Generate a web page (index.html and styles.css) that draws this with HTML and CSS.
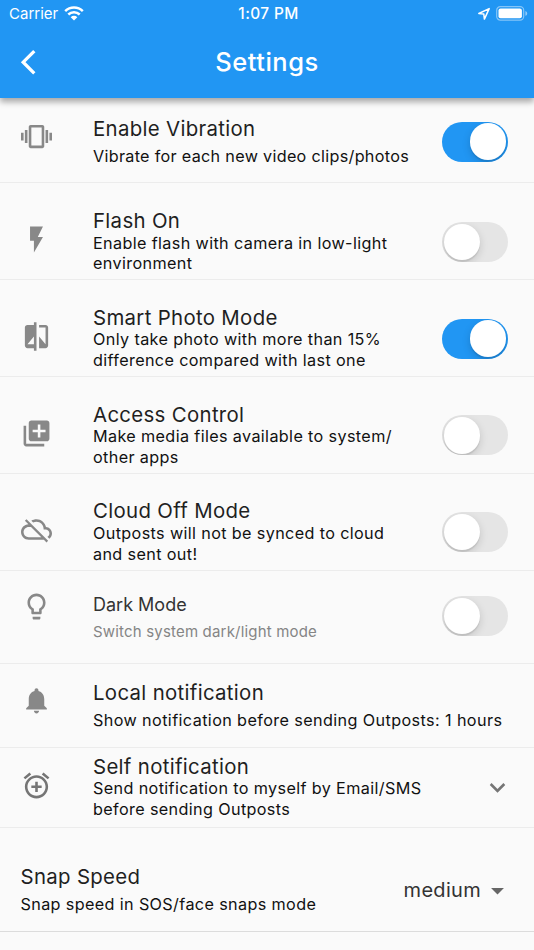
FILE: index.html
```html
<!DOCTYPE html>
<html lang="en">
<head>
  <meta charset="UTF-8">
  <meta name="viewport" content="width=device-width, initial-scale=1">
  <title>Settings</title>
  <link rel="stylesheet" href="styles.css">
</head>
<body>
  <header class="app-header">
    <div class="status-bar">
      <div class="status-left">
        <span class="carrier">Carrier</span>
        <svg class="wifi" viewBox="0 0 20 15" width="20" height="15">
          <path d="M1.2 5.2a12.6 12.6 0 0 1 17.6 0M4.3 8.5a8.2 8.2 0 0 1 11.4 0" fill="none" stroke="#fff" stroke-width="2.5"/>
          <path d="M10 14.5L6.7 11.2a4.7 4.7 0 0 1 6.6 0z" fill="#fff"/>
        </svg>
      </div>
      <span class="time">1:07 PM</span>
      <div class="status-right">
        <svg class="location" viewBox="0 0 14 14" width="14" height="14">
          <path d="M12.2 1.6L1.8 6.5l5 .6.6 5z" fill="none" stroke="#fff" stroke-width="1.5" stroke-linejoin="round"/>
        </svg>
        <svg class="battery" viewBox="0 0 32 15" width="32" height="15">
          <rect x=".7" y=".7" width="27" height="13.4" rx="3.6" fill="none" stroke="#fff" stroke-opacity=".45" stroke-width="1.2"/>
          <rect x="2.5" y="2.5" width="23.4" height="9.8" rx="2" fill="#fff"/>
          <path d="M29.4 5c1.2.5 1.8 1.4 1.8 2.4s-.6 1.9-1.8 2.4z" fill="#fff" fill-opacity=".5"/>
        </svg>
      </div>
    </div>
    <div class="nav-bar">
      <svg class="back" viewBox="0 0 18 28" width="18" height="28">
        <path d="M15.3 3.1L4.2 14.2l11.1 11.1" fill="none" stroke="#fff" stroke-width="3.3"/>
      </svg>
      <h1>Settings</h1>
    </div>
  </header>

  <main class="settings">
    <div class="row row-first">
      <svg class="icon" viewBox="0 0 24 24"><path d="M0 15h2V9H0v6zm3 2h2V7H3v10zm19-8v6h2V9h-2zm-3 8h2V7h-2v10zM16.5 3h-9C6.67 3 6 3.67 6 4.5v15c0 .83.67 1.5 1.5 1.5h9c.83 0 1.5-.67 1.5-1.5v-15c0-.83-.67-1.5-1.5-1.5zM16 19H8V5h8v14z"/></svg>
      <div class="text">
        <h2>Enable Vibration</h2>
        <p>Vibrate for each new video clips/photos</p>
      </div>
      <span class="switch on"></span>
    </div>

    <div class="row row-double">
      <svg class="icon" viewBox="0 0 24 24"><path d="M7 2v11h3v9l7-12h-4l4-8z"/></svg>
      <div class="text">
        <h2>Flash On</h2>
        <p>Enable flash with camera in low-light<br>environment</p>
      </div>
      <span class="switch"></span>
    </div>

    <div class="row row-double">
      <svg class="icon" viewBox="0 0 24 24"><path d="M10 3H5c-1.1 0-2 .9-2 2v14c0 1.1.9 2 2 2h5v2h2V1h-2v2zm0 15H5l5-6v6zm9-15h-5v2h5v13l-5-6v9h5c1.1 0 2-.9 2-2V5c0-1.1-.9-2-2-2z"/></svg>
      <div class="text">
        <h2>Smart Photo Mode</h2>
        <p>Only take photo with more than 15%<br>difference compared with last one</p>
      </div>
      <span class="switch on"></span>
    </div>

    <div class="row row-double">
      <svg class="icon" viewBox="0 0 24 24"><path d="M4 6H2v14c0 1.1.9 2 2 2h14v-2H4V6zm16-4H8c-1.1 0-2 .9-2 2v12c0 1.1.9 2 2 2h12c1.1 0 2-.9 2-2V4c0-1.1-.9-2-2-2zm-1 9h-4v4h-2v-4H9V9h4V5h2v4h4v2z"/></svg>
      <div class="text">
        <h2>Access Control</h2>
        <p>Make media files available to system/<br>other apps</p>
      </div>
      <span class="switch"></span>
    </div>

    <div class="row row-double">
      <svg class="icon" viewBox="0 0 24 24"><path d="M19.35 10.04C18.67 6.59 15.64 4 12 4c-1.48 0-2.85.43-4.01 1.17l1.46 1.46C10.21 6.23 11.08 6 12 6c3.04 0 5.5 2.46 5.5 5.5v.5H19c1.66 0 3 1.34 3 3 0 1.13-.64 2.11-1.56 2.62l1.45 1.45C23.16 18.16 24 16.68 24 15c0-2.64-2.05-4.78-4.65-4.96zM3 5.27l2.75 2.74C2.56 8.15 0 10.77 0 14c0 3.31 2.69 6 6 6h11.73l2 2L21 20.73 4.27 4 3 5.27zM7.73 10l8 8H6c-2.21 0-4-1.79-4-4s1.79-4 4-4h1.73z"/></svg>
      <div class="text">
        <h2>Cloud Off Mode</h2>
        <p>Outposts will not be synced to cloud<br>and sent out!</p>
      </div>
      <span class="switch"></span>
    </div>

    <div class="row row-dark">
      <svg class="icon" viewBox="0 0 24 24"><path d="M9 21c0 .55.45 1 1 1h4c.55 0 1-.45 1-1v-1H9v1zm3-19C8.14 2 5 5.14 5 9c0 2.38 1.19 4.47 3 5.74V17c0 .55.45 1 1 1h6c.55 0 1-.45 1-1v-2.26c1.81-1.27 3-3.36 3-5.74 0-3.86-3.14-7-7-7zm2.85 11.1l-.85.6V16h-4v-2.3l-.85-.6C7.8 12.16 7 10.63 7 9c0-2.76 2.24-5 5-5s5 2.24 5 5c0 1.63-.8 3.16-2.15 4.1z"/></svg>
      <div class="text">
        <h2>Dark Mode</h2>
        <p>Switch system dark/light mode</p>
      </div>
      <span class="switch"></span>
    </div>

    <div class="row row-local">
      <svg class="icon" viewBox="0 0 24 24"><path d="M12 22c1.1 0 2-.9 2-2h-4c0 1.1.89 2 2 2zm6-6v-5c0-3.07-1.64-5.64-4.5-6.32V4c0-.83-.67-1.5-1.5-1.5s-1.5.67-1.5 1.5v.68C7.63 5.36 6 7.92 6 11v5l-2 2v1h16v-1l-2-2z"/></svg>
      <div class="text">
        <h2>Local notification</h2>
        <p>Show notification before sending Outposts: 1 hours</p>
      </div>
    </div>

    <div class="row row-self">
      <svg class="icon" viewBox="0 0 24 24"><path d="M7.88 3.39L6.6 1.86 2 5.71l1.29 1.53 4.59-3.85zM22 5.72l-4.6-3.86-1.29 1.53 4.6 3.86L22 5.72zM12 4c-4.97 0-9 4.03-9 9s4.02 9 9 9c4.97 0 9-4.03 9-9s-4.03-9-9-9zm0 16c-3.87 0-7-3.13-7-7s3.13-7 7-7 7 3.13 7 7-3.13 7-7 7zm1-11h-2v3H8v2h3v3h2v-3h3v-2h-3V9z"/></svg>
      <div class="text">
        <h2>Self notification</h2>
        <p>Send notification to myself by Email/SMS<br>before sending Outposts</p>
      </div>
      <svg class="expand" viewBox="0 0 24 24"><path d="M16.59 8.59L12 13.17 7.41 8.59 6 10l6 6 6-6z"/></svg>
    </div>

    <div class="row row-snap">
      <div class="text">
        <h2>Snap Speed</h2>
        <p>Snap speed in SOS/face snaps mode</p>
      </div>
      <div class="dropdown">
        <span>medium</span>
        <svg viewBox="0 0 24 24"><path d="M7 10l5 5 5-5z"/></svg>
      </div>
    </div>
  </main>
</body>
</html>
```

FILE: styles.css
```css
* {
  box-sizing: border-box;
}
body {
  margin: 0;
  height: 950px;
  overflow: hidden;
  font-family: Inter, "Liberation Sans", sans-serif;
  background: #fafafa;
  color: #1f1f1f;
}
h1, h2, p {
  margin: 0;
}

/* Header */
.app-header {
  position: relative;
  height: 98px;
  background: #2196f3;
  color: #fff;
  box-shadow: 0 4px 6px rgba(0,0,0,0.33);
}
.status-bar {
  display: grid;
  grid-template-columns: 1fr auto 1fr;
  align-items: center;
  height: 26px;
  padding: 1px 6px 0 9px;
  font-size: 15px;
  line-height: 24px;
}
.status-left {
  display: flex;
  align-items: center;
  gap: 6px;
}
.time {
  font-size: 15.4px;
  font-weight: 500;
  letter-spacing: 0.4px;
}
.status-right {
  display: flex;
  align-items: center;
  justify-content: flex-end;
  gap: 5px;
}
.nav-bar {
  display: grid;
  grid-template-columns: 60px 1fr 60px;
  align-items: center;
  height: 72px;
}
.back {
  margin-left: 19px;
}
h1 {
  padding-bottom: 2px;
  text-align: center;
  font-size: 25.5px;
  font-weight: 500;
  letter-spacing: 0.5px;
}

/* Setting rows */
.row {
  display: flex;
  align-items: flex-start;
  padding: 0 26px 0 20.5px;
  border-bottom: 1px solid #ececec;
}
.icon {
  flex: none;
  width: 31px;
  height: 31px;
  margin-right: 41.5px;
  fill: #888;
}
.text {
  flex: 1;
  white-space: nowrap;
}
.text h2 {
  font-size: 20.4px;
  font-weight: 400;
  line-height: 24px;
  letter-spacing: 0.32px;
}
.text p {
  margin-top: 5px;
  font-size: 16.2px;
  line-height: 20.7px;
  letter-spacing: 0.36px;
  color: #111;
}

.row-first {
  height: 85.4px;
}
.row-first .icon {
  margin-top: 23px;
}
.row-first .text {
  padding-top: 19px;
}
.row-first .text p {
  letter-spacing: 0.3px;
}
.row-first .switch {
  margin-top: 23.5px;
}

.row-double {
  height: 96.8px;
}
.row-double .icon {
  margin-top: 40.6px;
}
.row-double .text {
  padding-top: 25.6px;
}
.row-double .text p {
  margin-top: -0.3px;
}
.row-double .switch {
  margin-top: 38.4px;
}

.row-dark {
  height: 93.4px;
}
.row-dark .icon {
  margin-top: 20px;
}
.row-dark .text {
  padding-top: 22.6px;
}
.row-dark .text h2 {
  font-size: 18px;
  letter-spacing: 0;
  color: #333;
}
.row-dark .text p {
  margin-top: 4.5px;
  font-size: 15px;
  letter-spacing: 0.18px;
  color: #858585;
}
.row-dark .switch {
  margin-top: 25.6px;
}

.row-local {
  height: 84px;
}
.row-local .icon {
  margin-top: 21px;
}
.row-local .text {
  padding-top: 17px;
}
.row-local .text p {
  letter-spacing: 0.39px;
}

.row-self {
  height: 80px;
}
.row-self .icon {
  margin-top: 22px;
  fill: #757575;
}
.row-self .text {
  padding-top: 7px;
}
.row-self .text p {
  margin-top: -1px;
}
.expand {
  width: 31px;
  height: 31px;
  margin: 24px -5px 0 0;
  fill: #757575;
}

.row-snap {
  height: 104px;
  border-bottom-color: #dcdcdc;
}
.row-snap .text {
  padding-top: 37px;
}
.dropdown {
  display: flex;
  align-items: center;
  gap: 1px;
  margin: 47px -5px 0 0;
  font-size: 20px;
  line-height: 31px;
  letter-spacing: 0.3px;
  color: #333;
}
.dropdown svg {
  width: 31px;
  height: 31px;
  fill: #666;
}

/* Switch */
.switch {
  display: flex;
  flex: none;
  width: 66px;
  height: 40px;
  padding: 1.75px;
  border-radius: 20px;
  background: #e5e5e5;
  overflow: hidden;
}
.switch::after {
  content: "";
  width: 36.5px;
  height: 36.5px;
  border-radius: 50%;
  background: #fff;
  box-shadow: 0 3px 8px rgba(0,0,0,0.15), 0 2px 1px rgba(0,0,0,0.08);
}
.switch.on {
  justify-content: flex-end;
  background: #2196f3;
}
```
